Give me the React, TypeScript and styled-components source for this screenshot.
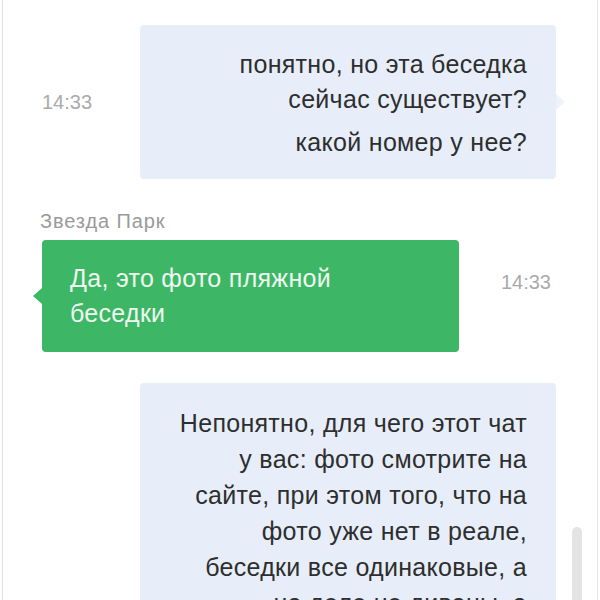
import React from "react";
import styled, { createGlobalStyle } from "styled-components";

const Global = createGlobalStyle`
  html, body {
    margin: 0;
    padding: 0;
    width: 600px;
    height: 600px;
    overflow: hidden;
    background: #ffffff;
    font-family: "Liberation Sans", Arial, sans-serif;
  }
`;

const Panel = styled.div`
  position: relative;
  box-sizing: border-box;
  margin: 0 2px;
  width: 596px;
  height: 600px;
  border-left: 1px solid #e1e1e1;
  border-right: 1px solid #e6e6e6;
  overflow: hidden;
  background: #fff;
`;

const Feed = styled.div`
  display: flex;
  flex-direction: column;
  padding: 25px 41px 0 39px;
`;

const Row = styled.div<{ $gap?: number; $end?: boolean }>`
  display: flex;
  align-items: center;
  justify-content: ${(p) => (p.$end ? "flex-end" : "space-between")};
  margin-top: ${(p) => p.$gap ?? 0}px;
`;

const Group = styled.div`
  display: flex;
  flex-direction: column;
`;

const Time = styled.div`
  font-size: 20px;
  color: #aaaaaa;
  line-height: 24px;
`;

const SideTime = styled(Time)`
  margin-right: 5px;
`;

const Sender = styled.div`
  font-size: 20px;
  letter-spacing: 0.9px;
  color: #9a9a9a;
  line-height: 20px;
  margin: 0 0 9px -2px;
`;

const Bubble = styled.div<{ $in?: boolean; $lh?: number }>`
  position: relative;
  box-sizing: border-box;
  width: ${(p) => (p.$in ? 417 : 416)}px;
  padding: ${(p) => (p.$in ? "21px 29px 21px 28px" : "22px 29px 19px 29px")};
  border-radius: 4px;
  background: ${(p) => (p.$in ? "#3db766" : "#e7eefa")};
  color: ${(p) => (p.$in ? "#eef8f0" : "#2e2e2e")};
  text-align: ${(p) => (p.$in ? "left" : "right")};
  font-size: 25px;
  letter-spacing: 0.3px;
  line-height: ${(p) => p.$lh ?? 35}px;

  &::after {
    content: "";
    position: absolute;
    top: 50%;
    margin-top: -8px;
    border-top: 8px solid transparent;
    border-bottom: 8px solid transparent;
    ${(p) =>
      p.$in
        ? `left: -9px; border-right: 9px solid #3db766;`
        : `right: -9px; border-left: 9px solid #eef2fb;`}
  }
`;

const Para = styled.p<{ $space?: boolean }>`
  margin: ${(p) => (p.$space ? "8px 0 0" : "0")};
`;

const Line = styled.span`
  display: block;
  white-space: nowrap;
`;

const Thumb = styled.div`
  position: absolute;
  left: 569px;
  top: 527px;
  width: 10px;
  height: 100px;
  border-radius: 5px 5px 0 0;
  background: #e4e4e4;
`;

export default function App() {
  return (
    <>
      <Global />
      <Panel>
        <Feed>
          <Row>
            <Time>14:33</Time>
            <Bubble>
              <Para>
                <Line>понятно, но эта беседка</Line>
                <Line>сейчас существует?</Line>
              </Para>
              <Para $space>
                <Line>какой номер у нее?</Line>
              </Para>
            </Bubble>
          </Row>

          <Row $gap={32}>
            <Group>
              <Sender>Звезда Парк</Sender>
              <Bubble $in>
                <Para>
                  <Line>Да, это фото пляжной</Line>
                  <Line>беседки</Line>
                </Para>
              </Bubble>
            </Group>
            <SideTime>14:33</SideTime>
          </Row>

          <Row $gap={31} $end>
            <Bubble $lh={36}>
              <Para>
                <Line>Непонятно, для чего этот чат</Line>
                <Line>у вас: фото смотрите на</Line>
                <Line>сайте, при этом того, что на</Line>
                <Line>фото уже нет в реале,</Line>
                <Line>беседки все одинаковые, а</Line>
                <Line>на деле не диваны, а</Line>
                <Line>обычные скамейки, и</Line>
                <Line>номера никто не знает,</Line>
                <Line>а на сайте об этом</Line>
                <Line>ничего не написано.</Line>
                <Line>Приходится звонить</Line>
                <Line>и уточнять всё</Line>
                <Line>по телефону, а чат</Line>
                <Line>ничем не помогает</Line>
              </Para>
            </Bubble>
          </Row>
        </Feed>
        <Thumb />
      </Panel>
    </>
  );
}
